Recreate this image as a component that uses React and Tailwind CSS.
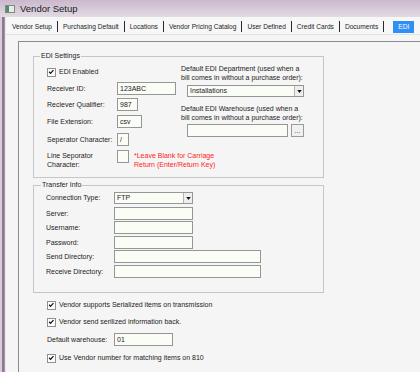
import { Fragment } from 'react';

const tabs = ['Vendor Setup', 'Purchasing Default', 'Locations', 'Vendor Pricing Catalog', 'User Defined', 'Credit Cards', 'Documents'];

function Check({ label, className = '' }) {
  return (
    <div className={`flex h-[10px] items-center ${className}`}>
      <div className="relative h-[9px] w-[9px] border border-[#8e8f8f] bg-[#fdfdfd]">
        <svg viewBox="0 0 9 9" className="absolute left-0 top-0 h-[7px] w-[7px]">
          <path d="M1.5 3.5 L3.3 5.6 L7 1.5" fill="none" stroke="#111" strokeWidth="1.6" />
        </svg>
      </div>
      <span className="ml-[3px] leading-[10px]">{label}</span>
    </div>
  );
}

function Box({ w, value = '', className = '' }) {
  return (
    <div className={`flex h-[13px] items-center border border-[#969696] bg-[#f9fdf6] pl-[2px] leading-[11px] ${w} ${className}`}>
      {value}
    </div>
  );
}

function Select({ w, value, className = '' }) {
  return (
    <div className={`flex h-[12px] items-center justify-between border border-[#969696] bg-[#f9fdf6] pl-[2px] leading-[10px] ${w} ${className}`}>
      <span>{value}</span>
      <div className="flex h-[10px] w-[9px] items-center justify-center border-l border-[#b4b4b4] bg-[#eeeeee]">
        <svg viewBox="0 0 6 4" className="h-[3px] w-[5px]">
          <path d="M0 0 H6 L3 4 Z" fill="#111" />
        </svg>
      </div>
    </div>
  );
}

function Row({ label, w, value, labelW = 'w-[68px]', className = '' }) {
  return (
    <div className={`flex items-center ${className}`}>
      <span className={`${labelW} leading-[10px]`}>{label}</span>
      <Box w={w} value={value} />
    </div>
  );
}

export default function App() {
  return (
    <div className="flex h-[372px] w-[420px] flex-col overflow-hidden bg-[#f5f5f5] font-['Liberation_Sans',Arial,sans-serif] text-[7px] text-[#1c1c1c]">
      {/* title bar */}
      <div className="flex h-[17px] shrink-0 items-center bg-gradient-to-b from-[#cbb7cd] via-[#d6c9d8] to-[#e2dae3] pl-[5px]">
        <div className="flex h-[8px] w-[10px] border border-[#7a8a80] bg-[#e8ece8]">
          <div className="h-full w-[3px] bg-[#4f8f6a]" />
        </div>
        <span className="ml-[5px] text-[9.5px] leading-[12px] text-[#1a1a1a]">Vendor Setup</span>
      </div>

      <div className="flex flex-1">
        {/* window frame */}
        <div className="flex w-[6px] shrink-0">
          <div className="w-[2px] bg-[#d9cbe0]" />
          <div className="w-[2px] bg-[#8c7a84]" />
          <div className="w-[1px] bg-[#a690b4]" />
          <div className="w-[1px] bg-[#ece6ee]" />
        </div>

        <div className="flex min-w-0 flex-1 flex-col">
          {/* tab strip */}
          <div className="flex h-[18px] items-center overflow-hidden whitespace-nowrap border-b border-[#e2e2e2] bg-[#f7f7f7] pl-[1px] pt-[2px] text-[6.6px]">
            {tabs.map((t) => (
              <Fragment key={t}>
                <span className="shrink-0 px-[5px] leading-[10px]">{t}</span>
                <span className="h-[11px] w-px shrink-0 bg-[#2a2a2a]" />
              </Fragment>
            ))}
            <span className="ml-[9px] flex h-[12px] w-[21px] shrink-0 items-center justify-center bg-[#2f8ff7] text-white">EDI</span>
          </div>

          {/* panel */}
          <div className="ml-[12px] mt-[6px] flex flex-1 flex-col border-l border-t border-[#8f8a92] pl-[14px]">
            <fieldset className="mt-[10px] h-[126px] w-[291px] border border-[#c6c6c6] p-0">
              <legend className="ml-[6px] px-[1px] leading-[8px]">EDI Settings</legend>
              <div className="flex pl-[13px]">
                <div className="flex w-[134px] flex-col">
                  <Check label="EDI Enabled" className="mt-[7px]" />
                  <Row label="Receiver ID:" labelW="w-[70px]" w="w-[59px]" value="123ABC" className="mt-[5px]" />
                  <Row label="Reciever Qualifier:" labelW="w-[70px]" w="w-[21px]" value="987" className="mt-[3px]" />
                  <Row label="File Extension:" labelW="w-[70px]" w="w-[25px]" value="csv" className="mt-[4px]" />
                  <Row label="Seperator Character:" labelW="w-[70px]" w="w-[12px]" value="/" className="mt-[5px]" />
                  <div className="mt-[4px] flex items-start">
                    <span className="w-[70px] pt-[1px] leading-[9px]">Line Seporator<br />Character:</span>
                    <Box w="w-[12px]" />
                  </div>
                </div>
                <div className="flex flex-col">
                  <p className="mt-[4px] leading-[9px]">Default EDI Department (used when a<br />bill comes in without a purchase order):</p>
                  <Select w="w-[117px]" value="Installations" className="ml-[6px] mt-[3px]" />
                  <p className="mt-[7px] leading-[9px]">Default EDI Warehouse (used when a<br />bill comes in without a purchase order):</p>
                  <div className="ml-[6px] mt-[2px] flex">
                    <Box w="w-[101px]" />
                    <div className="ml-[3px] flex h-[13px] w-[13px] items-center justify-center border border-[#9a9a9a] bg-[#f0f0f0] leading-[8px]">...</div>
                  </div>
                  <p className="-ml-[47px] mt-[14px] leading-[9px] text-[#ff2323]">*Leave Blank for Carriage<br />Return (Enter/Return Key)</p>
                </div>
              </div>
            </fieldset>

            <fieldset className="mt-[3px] h-[112px] w-[291px] border border-[#c6c6c6] p-0">
              <legend className="ml-[7px] px-[1px] leading-[8px]">Transfer Info</legend>
              <div className="flex flex-col pl-[12px]">
                <div className="mt-[3px] flex items-center">
                  <span className="w-[68px] leading-[10px]">Connection Type:</span>
                  <Select w="w-[79px]" value="FTP" />
                </div>
                <Row label="Server:" w="w-[79px]" className="mt-[3px]" />
                <Row label="Username:" w="w-[79px]" className="mt-[1px]" />
                <Row label="Password:" w="w-[79px]" className="mt-[2px]" />
                <Row label="Send Directory:" w="w-[147px]" className="mt-[1px]" />
                <Row label="Receive Directory:" w="w-[147px]" className="mt-[2px]" />
              </div>
            </fieldset>

            <div className="flex flex-col pl-[14px]">
              <Check label="Vendor supports Serialized items on transmission" className="mt-[7px]" />
              <Check label="Vendor send serilized information back." className="mt-[7px]" />
              <Row label="Default warehouse:" labelW="w-[67px]" w="w-[59px]" value="01" className="mt-[6px]" />
              <Check label="Use Vendor number for matching items on 810" className="mt-[7px]" />
            </div>
          </div>
        </div>
      </div>
    </div>
  );
}
